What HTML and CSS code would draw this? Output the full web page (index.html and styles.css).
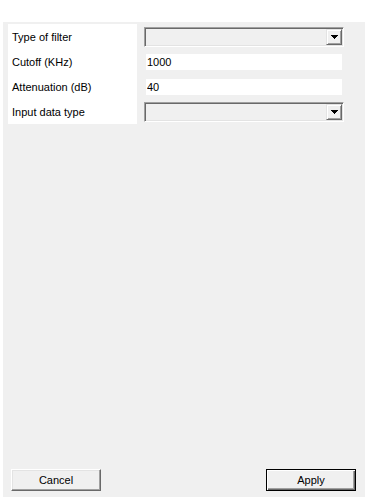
FILE: index.html
```html
<!DOCTYPE html>
<html lang="en">
<head>
  <meta charset="UTF-8" />
  <title>Filter settings</title>
  <link rel="stylesheet" href="styles.css">
</head>
<body>
  <div class="panel">
    <div class="form-grid">
      <div class="label">Type of filter</div>
      <div class="value">
        <div class="combo">
          <span class="combo-btn">
            <svg class="arrow" width="7" height="4" viewBox="0 0 7 4"><path d="M0 0h7v1H6v1H5v1H4v1H3V3H2V2H1V1H0z" fill="#000"/></svg>
          </span>
        </div>
      </div>

      <div class="label">Cutoff (KHz)</div>
      <div class="value"><input class="field" type="text" value="1000"></div>

      <div class="label">Attenuation (dB)</div>
      <div class="value"><input class="field" type="text" value="40"></div>

      <div class="label">Input data type</div>
      <div class="value">
        <div class="combo">
          <span class="combo-btn">
            <svg class="arrow" width="7" height="4" viewBox="0 0 7 4"><path d="M0 0h7v1H6v1H5v1H4v1H3V3H2V2H1V1H0z" fill="#000"/></svg>
          </span>
        </div>
      </div>
    </div>

    <div class="buttons">
      <button class="btn">Cancel</button>
      <button class="btn btn-default">Apply</button>
    </div>
  </div>
</body>
</html>
```

FILE: styles.css
```css
body {
  margin: 0;
  background: #fff;
  font-family: 'Liberation Sans', Arial, sans-serif;
  font-size: 11px;
  color: #000;
}

.panel {
  margin: 22px 3px 0 3px;
  height: 475px;
  box-sizing: border-box;
  background: #f0f0f0;
  padding: 2px 9px 6px 5px;
  display: flex;
  flex-direction: column;
}

.form-grid {
  display: grid;
  grid-template-columns: 129px 1fr;
  grid-auto-rows: 25px;
}

.label {
  background: #fff;
  padding-left: 4px;
  display: flex;
  align-items: center;
}

.value {
  padding-left: 7px;
  display: flex;
  align-items: center;
}

.combo {
  width: 200px;
  height: 20px;
  box-sizing: border-box;
  border: 1px solid;
  border-color: #a0a0a0 #fff #fff #a0a0a0;
  box-shadow: inset 1px 1px 0 #696969, inset -1px -1px 0 #e3e3e3;
  background: #f0f0f0;
  display: flex;
  justify-content: flex-end;
  padding: 1px;
}

.combo-btn {
  width: 16px;
  height: 16px;
  box-sizing: border-box;
  background: #f0f0f0;
  border: 1px solid;
  border-color: #e3e3e3 #696969 #696969 #e3e3e3;
  box-shadow: inset 1px 1px 0 #fff, inset -1px -1px 0 #a0a0a0;
  display: flex;
  align-items: center;
  justify-content: center;
}

.arrow {
  display: block;
  margin-top: 1px;
}

.field {
  width: 196px;
  height: 16px;
  box-sizing: border-box;
  margin-left: 2px;
  border: none;
  padding: 0 1px;
  background: #fff;
  font-family: inherit;
  font-size: 11px;
  color: #000;
}

.buttons {
  margin-top: auto;
  padding-left: 3px;
  display: flex;
  justify-content: space-between;
  align-items: flex-end;
}

.btn {
  width: 90px;
  height: 22px;
  box-sizing: border-box;
  background: #f0f0f0;
  border: 1px solid;
  border-color: #fff #696969 #696969 #fff;
  box-shadow: inset -1px -1px 0 #a0a0a0, inset 1px 1px 0 #e3e3e3;
  font-family: inherit;
  font-size: 11px;
  color: #000;
  padding: 0;
}

.btn-default {
  border: 1px solid #000;
  box-shadow: inset 1px 1px 0 #fff, inset -1px -1px 0 #696969, inset -2px -2px 0 #a0a0a0;
}
```
